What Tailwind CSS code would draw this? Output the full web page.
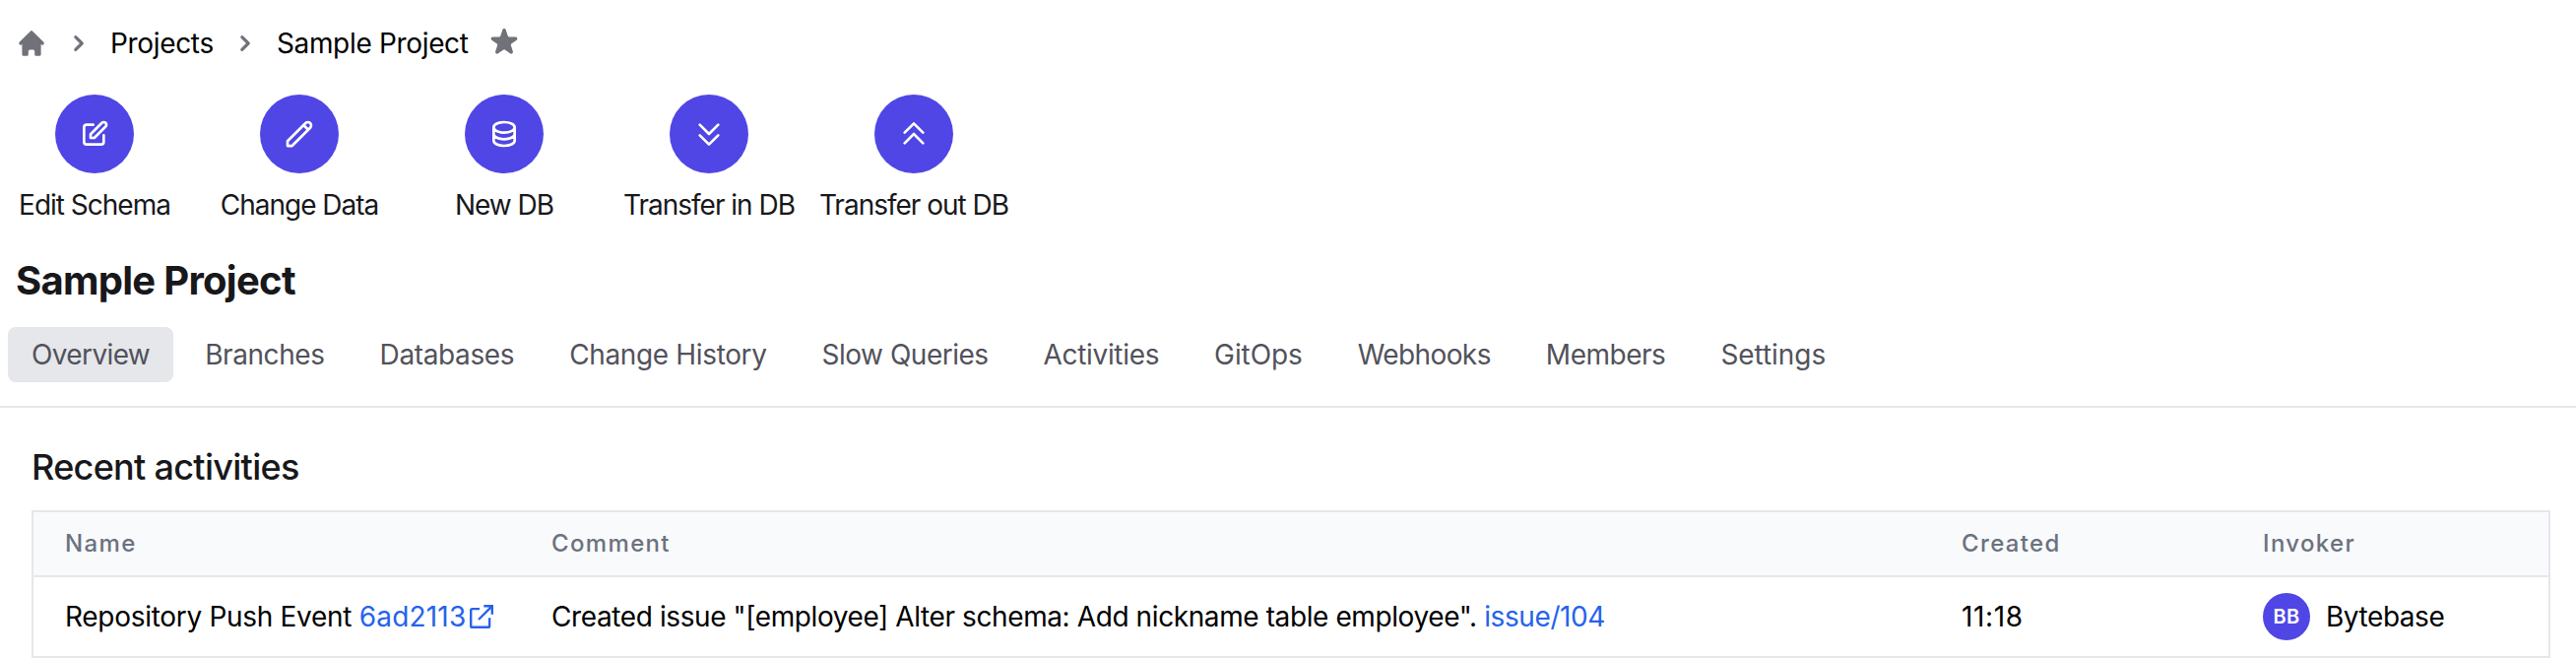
<!DOCTYPE html>
<html lang="en">
<head>
<meta charset="utf-8">
<title>Sample Project</title>
<script src="https://cdn.jsdelivr.net/npm/@tailwindcss/browser@4"></script>
</head>
<body class="h-[668px] w-[2616px] overflow-hidden bg-white font-['Inter',sans-serif] text-[28px] leading-10 text-black">
<nav class="flex h-[88px] items-center pl-4 tracking-[-0.33px]">
  <svg class="size-8 text-[#71717a]" viewBox="0 0 20 20" fill="currentColor"><path d="M10.707 2.293a1 1 0 00-1.414 0l-7 7a1 1 0 001.414 1.414L4 10.414V17a1 1 0 001 1h2a1 1 0 001-1v-2a1 1 0 011-1h2a1 1 0 011 1v2a1 1 0 001 1h2a1 1 0 001-1v-6.586l.293.293a1 1 0 001.414-1.414l-7-7z"/></svg>
  <svg class="ml-4 size-8 text-[#71717a]" viewBox="0 0 20 20" fill="currentColor"><path fill-rule="evenodd" d="M7.293 14.707a1 1 0 010-1.414L10.586 10 7.293 6.707a1 1 0 011.414-1.414l4 4a1 1 0 010 1.414l-4 4a1 1 0 01-1.414 0z"/></svg>
  <span class="ml-4">Projects</span>
  <svg class="ml-4 size-8 text-[#71717a]" viewBox="0 0 20 20" fill="currentColor"><path fill-rule="evenodd" d="M7.293 14.707a1 1 0 010-1.414L10.586 10 7.293 6.707a1 1 0 011.414-1.414l4 4a1 1 0 010 1.414l-4 4a1 1 0 01-1.414 0z"/></svg>
  <span class="ml-4">Sample Project</span>
  <svg class="mb-0.5 ml-[18px] size-9 text-[#71717a]" viewBox="0 0 20 20" fill="currentColor"><path d="M9.049 2.927c.3-.921 1.603-.921 1.902 0l1.07 3.292a1 1 0 00.95.69h3.462c.969 0 1.371 1.24.588 1.81l-2.8 2.034a1 1 0 00-.364 1.118l1.07 3.292c.3.921-.755 1.688-1.54 1.118l-2.8-2.034a1 1 0 00-1.175 0l-2.8 2.034c-.784.57-1.838-.197-1.539-1.118l1.07-3.292a1 1 0 00-.364-1.118L2.98 8.72c-.783-.57-.38-1.81.588-1.81h3.461a1 1 0 00.951-.69l1.07-3.292z"/></svg>
</nav>
<section class="flex gap-4 pt-2 tracking-[-1px] whitespace-nowrap text-[#18181b]">
  <div class="flex w-48 flex-col items-center gap-3"><span class="flex size-20 items-center justify-center rounded-full bg-[#4f46e5]">
    <svg class="size-8 text-white" viewBox="0 0 24 24" fill="none" stroke="currentColor" stroke-width="2" stroke-linecap="round" stroke-linejoin="round"><path d="M11 5H6a2 2 0 00-2 2v11a2 2 0 002 2h11a2 2 0 002-2v-5m-1.414-9.414a2 2 0 112.828 2.828L11.828 15H9v-2.828l8.586-8.586z"/></svg></span>
    <span>Edit Schema</span></div>
  <div class="flex w-48 flex-col items-center gap-3"><span class="flex size-20 items-center justify-center rounded-full bg-[#4f46e5]">
    <svg class="size-8 text-white" viewBox="0 0 24 24" fill="none" stroke="currentColor" stroke-width="2" stroke-linecap="round" stroke-linejoin="round"><path d="M15.232 5.232l3.536 3.536m-2.036-5.036a2.5 2.5 0 113.536 3.536L6.5 21.036H3v-3.572L16.732 3.732z"/></svg></span>
    <span>Change Data</span></div>
  <div class="flex w-48 flex-col items-center gap-3"><span class="flex size-20 items-center justify-center rounded-full bg-[#4f46e5]">
    <svg class="size-8 text-white" viewBox="0 0 24 24" fill="none" stroke="currentColor" stroke-width="2" stroke-linecap="round" stroke-linejoin="round"><path d="M4 7v10c0 2.210 3.582 4 8 4s8-1.790 8-4V7M4 7c0 2.210 3.582 4 8 4s8-1.790 8-4M4 7c0-2.210 3.582-4 8-4s8 1.790 8 4m0 5c0 2.210-3.582 4-8 4s-8-1.790-8-4"/></svg></span>
    <span>New DB</span></div>
  <div class="flex w-48 flex-col items-center gap-3"><span class="flex size-20 items-center justify-center rounded-full bg-[#4f46e5]">
    <svg class="size-8 text-white" viewBox="0 0 24 24" fill="none" stroke="currentColor" stroke-width="2" stroke-linecap="round" stroke-linejoin="round"><path d="M19 13l-7 7-7-7m14-8l-7 7-7-7"/></svg></span>
    <span>Transfer in DB</span></div>
  <div class="flex w-48 flex-col items-center gap-3"><span class="flex size-20 items-center justify-center rounded-full bg-[#4f46e5]">
    <svg class="size-8 text-white" viewBox="0 0 24 24" fill="none" stroke="currentColor" stroke-width="2" stroke-linecap="round" stroke-linejoin="round"><path d="M5 11l7-7 7 7M5 19l7-7 7 7"/></svg></span>
    <span>Transfer out DB</span></div>
</section>
<h1 class="mt-[29px] pl-4 text-[40px] leading-[56px] font-bold tracking-[-0.72px] text-[#18181b]">Sample Project</h1>
<div class="mt-[19px] flex h-[82px] items-start gap-2 border-b-2 border-[#e5e7eb] pl-2 text-[#52525b]">
  <a class="rounded-lg bg-[#e5e7eb] px-6 py-2 tracking-[-0.63px]">Overview</a>
  <a class="px-6 py-2 tracking-[-0.42px]">Branches</a>
  <a class="px-6 py-2 tracking-[-0.37px]">Databases</a>
  <a class="px-6 py-2 tracking-[-0.36px]">Change History</a>
  <a class="px-6 py-2 tracking-[-0.5px]">Slow Queries</a>
  <a class="px-6 py-2 tracking-[-0.33px]">Activities</a>
  <a class="px-6 py-2 tracking-[-0.1px]">GitOps</a>
  <a class="px-6 py-2 tracking-[-0.6px]">Webhooks</a>
  <a class="px-6 py-2 tracking-[-0.48px]">Members</a>
  <a class="px-6 py-2 tracking-[-0.05px]">Settings</a>
</div>
<main class="px-8 pt-8">
  <h2 class="text-[36px] leading-[56px] font-medium tracking-[-0.7px] text-[#18181b]">Recent activities</h2>
  <div class="mt-4 w-[2558px] border-2 border-[#e5e7eb]">
    <div class="grid h-[66px] grid-cols-[494px_1432px_306px_1fr] items-center border-b-2 border-[#e5e7eb] bg-[#f9fafb] pl-8 text-2xl font-medium tracking-[1.35px] text-[#6b7280]">
      <span>Name</span><span>Comment</span><span>Created</span><span>Invoker</span>
    </div>
    <div class="grid h-20 grid-cols-[494px_1432px_306px_1fr] items-center pl-8">
      <div class="flex items-center tracking-[-0.3px]">Repository Push Event&nbsp;<a class="flex items-center tracking-[0.2px] text-[#2563eb]">6ad2113<svg class="size-8" viewBox="0 0 24 24" fill="none" stroke="currentColor" stroke-width="1.8"><path stroke-linejoin="round" d="M10.500 6.100H4.900a1 1 0 0 0-1 1v12a1 1 0 0 0 1 1h12.200a1 1 0 0 0 1-1V13"/><path d="M13.750 3.900h6.350v6.350M20 4L9.750 14.250"/></svg></a></div>
      <div class="tracking-[-0.4px]">Created issue "[employee] Alter schema: Add nickname table employee". <a class="text-[#2563eb]">issue/104</a></div>
      <div class="tracking-[0.6px]">11:18</div>
      <div class="flex items-center gap-4 tracking-[-0.45px]"><span class="flex size-12 items-center justify-center rounded-full bg-[#4f46e5] text-xl font-semibold tracking-[0.3px] text-white">BB</span>Bytebase</div>
    </div>
  </div>
</main>
</body>
</html>
